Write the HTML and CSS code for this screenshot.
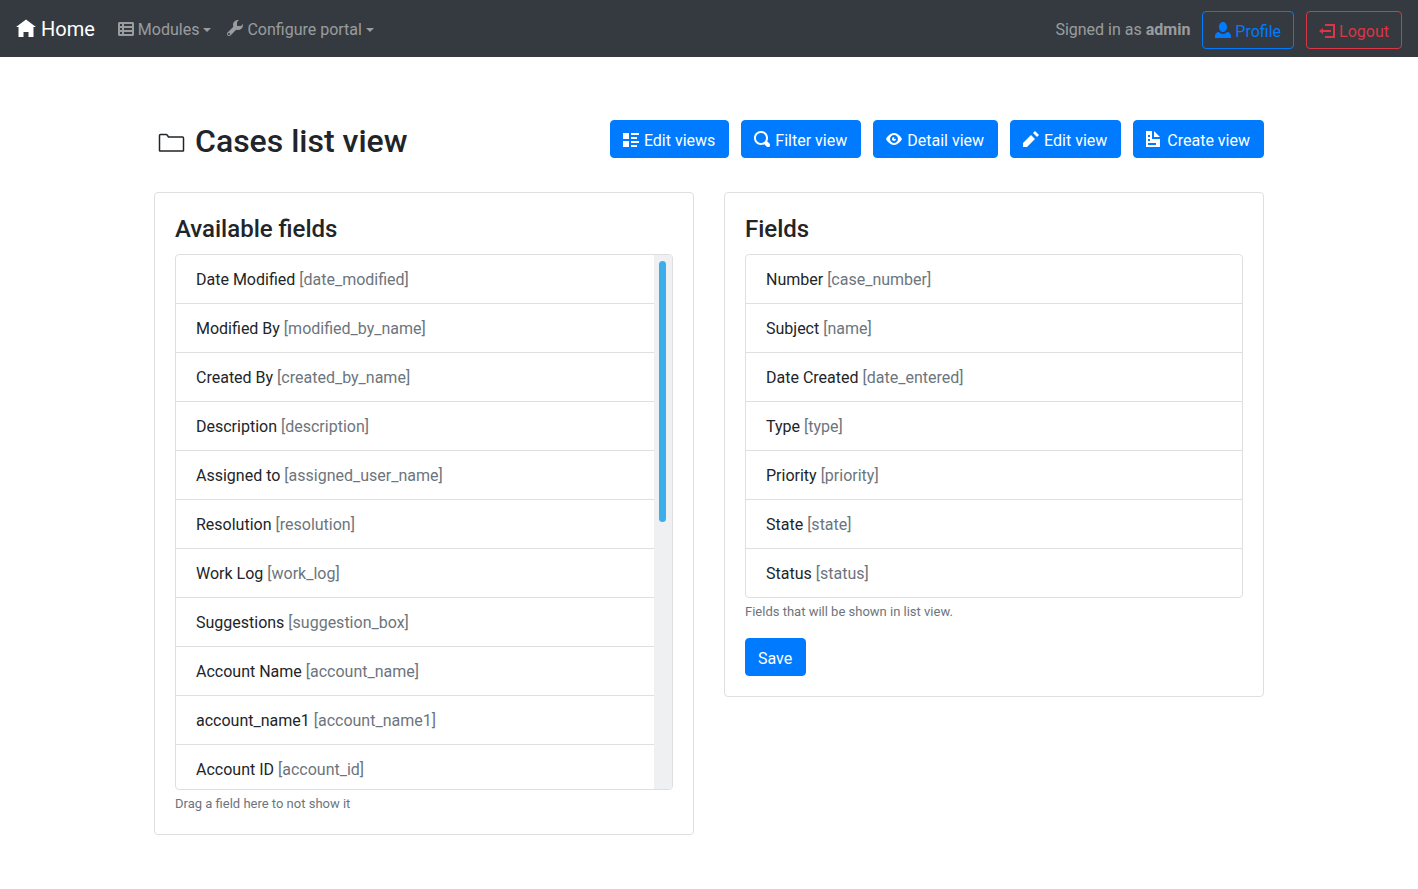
FILE: index.html
```html
<!DOCTYPE html>
<html lang="en">
<head>
<meta charset="utf-8">
<title>Cases list view</title>
<link rel="stylesheet" href="styles.css">
</head>
<body>
<header class="navbar">
  <nav class="nav">
    <a class="brand" href="#"><svg class="icon icon-lg" viewBox="0 -1 8 8" aria-hidden="true"><path d="M4 0l-4 3h1v4h2v-2h2v2h2v-4.03l1 .03-4-3z"/></svg>Home</a>
    <button class="nav-link" type="button"><svg class="icon" viewBox="0 -1 8 8" aria-hidden="true"><path d="M.75 0c-.402 0-.75.348-.75.75v5.5c0 .402.348.75.75.75h6.5c.402 0 .75-.348.75-.75v-5.5c0-.402-.348-.75-.75-.75h-6.5zm.25 1h1v1h-1v-1zm2 0h4v1h-4v-1zm-2 2h1v1h-1v-1zm2 0h4v1h-4v-1zm-2 2h1v1h-1v-1zm2 0h4v1h-4v-1z"/></svg>Modules<span class="caret"></span></button>
    <button class="nav-link" type="button"><svg class="icon" viewBox="0 0 8 8" aria-hidden="true"><path d="M5.5 0c-1.38 0-2.5 1.12-2.5 2.5 0 .32.08.62.19.91l-2.91 2.88c-.39.39-.39 1.05 0 1.44.2.2.46.28.72.28.26 0 .52-.09.72-.28l2.88-2.91c.28.11.58.19.91.19 1.38 0 2.5-1.12 2.5-2.5 0-.16 0-.32-.03-.47l-.97.97h-2v-2l.97-.97c-.15-.03-.31-.03-.47-.03zm-4.5 6.500c.28 0 .5.22.5.5s-.22.5-.5.5-.5-.22-.5-.5.22-.5.5-.5z"/></svg>Configure portal<span class="caret"></span></button>
  </nav>
  <div class="account">
    <span class="signed-in">Signed in as <strong>admin</strong></span>
    <a class="btn btn-outline-primary" href="#"><svg class="icon" viewBox="0 0 8 8" aria-hidden="true"><path d="M4 0c-1.1 0-2 1.12-2 2.5s.9 2.5 2 2.5 2-1.12 2-2.5-.9-2.5-2-2.5zm-2.09 5c-1.06.05-1.91.92-1.91 2v1h8v-1c0-1.08-.84-1.95-1.91-2-.54.61-1.28 1-2.09 1-.81 0-1.55-.39-2.09-1z"/></svg>Profile</a>
    <a class="btn btn-outline-danger" href="#"><svg class="icon" viewBox="0 -1 8 8" aria-hidden="true"><path d="M3 0v1h4v5h-4v1h5v-7h-5zm-1 2l-2 1.5 2 1.5v-1h4v-1h-4v-1z"/></svg>Logout</a>
  </div>
</header>

<main class="container">
  <div class="page-head">
    <h1 class="page-title"><svg class="folder" viewBox="0 0 32 32" aria-hidden="true"><path d="M5.500 25.500v-15q0-1 1-1h5.500q1 0 1.500 1l1 1.500h14q1 0 1 1v12.500q0 .500-.500.500h-23q-.500 0-.500-.500z"/></svg>Cases list view</h1>
    <div class="actions">
      <a class="btn btn-primary" href="#"><svg class="icon" viewBox="0 -1 8 8" aria-hidden="true"><path d="M0 0v3h3v-3h-3zm4 0v1h4v-1h-4zm0 2v1h3v-1h-3zm-4 2v3h3v-3h-3zm4 0v1h4v-1h-4zm0 2v1h3v-1h-3z"/></svg>Edit views</a>
      <a class="btn btn-primary" href="#"><svg class="icon" viewBox="0 0 8 8" aria-hidden="true"><path d="M3.500 0c-1.930 0-3.500 1.570-3.500 3.500s1.570 3.500 3.500 3.500c.59 0 1.170-.14 1.660-.41a1 1 0 0 0 .13.13l1 1a1.020 1.020 0 1 0 1.440-1.440l-1-1a1 1 0 0 0-.16-.13c.27-.49.44-1.060.44-1.660 0-1.930-1.550-3.500-3.500-3.500zm0 1c1.390 0 2.500 1.110 2.500 2.500 0 .66-.24 1.270-.66 1.720-.01.010-.02.020-.03.030a1 1 0 0 0-.13.130c-.44.4-1.040.63-1.690.63-1.390 0-2.500-1.110-2.500-2.500s1.110-2.500 2.500-2.500z"/></svg>Filter view</a>
      <a class="btn btn-primary" href="#"><svg class="icon" viewBox="0 -1 8 8" aria-hidden="true"><path d="M4.030 0c-2.530 0-4.030 3-4.030 3s1.500 3 4.030 3c2.470 0 3.970-3 3.970-3s-1.500-3-3.970-3zm-.03 1c1.110 0 2 .9 2 2 0 1.110-.89 2-2 2-1.100 0-2-.89-2-2 0-1.100.9-2 2-2zm0 1c-.55 0-1 .45-1 1s.45 1 1 1 1-.45 1-1c0-.1-.04-.19-.06-.28-.08.16-.24.28-.44.28-.28 0-.5-.22-.5-.5 0-.2.12-.36.28-.44-.09-.03-.18-.06-.28-.06z"/></svg>Detail view</a>
      <a class="btn btn-primary" href="#"><svg class="icon" viewBox="0 0 8 8" aria-hidden="true"><path d="M6 0l-1 1 2 2 1-1-2-2zm-2 2l-4 4v2h2l4-4-2-2z"/></svg>Edit view</a>
      <a class="btn btn-primary" href="#"><svg class="icon" viewBox="0 0 8 8" aria-hidden="true"><path d="M0 0v8h7v-4h-4v-4h-3zm4 0v3h3l-3-3zm-3 2h1v1h-1v-1zm0 2h1v1h-1v-1zm0 2h4v1h-4v-1z"/></svg>Create view</a>
    </div>
  </div>

  <div class="columns">
    <section class="card">
      <h2 class="card-title">Available fields</h2>
      <div class="list-frame">
        <ul class="list list-scroll">
          <li class="item">Date Modified <span class="key">[date_modified]</span></li>
          <li class="item">Modified By <span class="key">[modified_by_name]</span></li>
          <li class="item">Created By <span class="key">[created_by_name]</span></li>
          <li class="item">Description <span class="key">[description]</span></li>
          <li class="item">Assigned to <span class="key">[assigned_user_name]</span></li>
          <li class="item">Resolution <span class="key">[resolution]</span></li>
          <li class="item">Work Log <span class="key">[work_log]</span></li>
          <li class="item">Suggestions <span class="key">[suggestion_box]</span></li>
          <li class="item">Account Name <span class="key">[account_name]</span></li>
          <li class="item">account_name1 <span class="key">[account_name1]</span></li>
          <li class="item">Account ID <span class="key">[account_id]</span></li>
        </ul>
        <div class="track" aria-hidden="true"><div class="thumb"></div></div>
      </div>
      <small class="hint">Drag a field here to not show it</small>
    </section>

    <section class="card">
      <h2 class="card-title">Fields</h2>
      <div class="list-frame">
        <ul class="list">
          <li class="item">Number <span class="key">[case_number]</span></li>
          <li class="item">Subject <span class="key">[name]</span></li>
          <li class="item">Date Created <span class="key">[date_entered]</span></li>
          <li class="item">Type <span class="key">[type]</span></li>
          <li class="item">Priority <span class="key">[priority]</span></li>
          <li class="item">State <span class="key">[state]</span></li>
          <li class="item">Status <span class="key">[status]</span></li>
        </ul>
      </div>
      <small class="hint">Fields that will be shown in list view.</small>
      <button class="btn btn-primary save" type="submit">Save</button>
    </section>
  </div>
</main>
</body>
</html>
```
FILE: styles.css
```css
*, *::before, *::after { box-sizing: border-box; }

body {
  margin: 0;
  background: #fff;
  color: #212529;
  font: 400 16px/24px Roboto, "Liberation Sans", sans-serif;
}

a { text-decoration: none; }

.icon {
  flex: none;
  width: 16px;
  height: 16px;
  margin: 0 4px 4px 0;
  fill: currentColor;
}
.icon-lg { width: 20px; height: 20px; margin-right: 5px; }

/* Top bar */
.navbar {
  display: flex;
  justify-content: space-between;
  padding: 11px 16px 8px;
  background: #343a40;
}
.nav, .account { display: flex; align-items: flex-start; }
.nav { gap: 16px; }
.account { gap: 12px; }
.brand, .nav-link, .signed-in {
  display: flex;
  align-items: center;
  height: 38px;
}
.brand {
  height: 36px;
  margin-right: 7px;
  color: #fff;
  font-size: 20px;
}
.nav-link {
  padding: 0;
  border: 0;
  background: none;
  color: rgba(255, 255, 255, .5);
  font: inherit;
}
.caret {
  margin-left: 4px;
  border: 4px solid transparent;
  border-top-color: currentColor;
  border-bottom: 0;
}
.signed-in { color: rgba(255, 255, 255, .5); white-space: pre; }
.signed-in strong { font-weight: 700; }

/* Buttons */
.btn {
  display: inline-flex;
  align-items: center;
  padding: 8px 12px 4px;
  border: 1px solid transparent;
  border-radius: 4px;
  background: none;
  font: inherit;
  white-space: nowrap;
  cursor: pointer;
}
.btn-primary {
  padding-right: 13px;
  border-color: #007bff;
  background: #007bff;
  color: #fff;
}
.btn-primary .icon { margin-right: 5px; }
.btn-outline-primary { border-color: #007bff; color: #007bff; }
.btn-outline-danger { border-color: #dc3545; color: #dc3545; }

/* Page */
.container {
  max-width: 1140px;
  margin: 0 auto;
  padding: 63px 15px 48px;
}
.page-head {
  display: flex;
  align-items: flex-start;
  justify-content: space-between;
  margin-bottom: 30px;
}
.page-title {
  display: flex;
  align-items: center;
  gap: 9px;
  margin: 0;
  font-size: 32px;
  font-weight: 500;
  line-height: 42px;
}
.folder {
  width: 32px;
  height: 32px;
  fill: none;
  stroke: currentColor;
  stroke-width: 1.500;
}
.actions { display: flex; gap: 12px; }

.columns {
  display: grid;
  grid-template-columns: 1fr 1fr;
  gap: 30px;
  align-items: start;
}
.card {
  padding: 20px;
  border: 1px solid #dfdfdf;
  border-radius: 4px;
}
.card-title {
  margin: 0 0 9px;
  font-size: 24px;
  font-weight: 500;
  line-height: 32px;
}
.list-frame {
  display: flex;
  overflow: hidden;
  border: 1px solid #dfdfdf;
  border-radius: 4px;
}
.list {
  flex: 1;
  margin: 0;
  padding: 0;
  list-style: none;
}
.list-scroll {
  max-height: 534px;
  overflow-y: auto;
  scrollbar-width: none;
}
.item { padding: 13px 20px 11px; }
.item + .item { border-top: 1px solid #dfdfdf; }
.key, .hint { color: #6c757d; }
.track { width: 18px; padding: 6px 5px; background: #eff0f1; }
.thumb {
  width: 7px;
  height: 50%;
  border-radius: 4px;
  background: #3daee9;
}
.hint {
  display: block;
  margin-top: 4px;
  font-size: 13px;
  line-height: 20px;
}
.save { margin-top: 16px; }
```
